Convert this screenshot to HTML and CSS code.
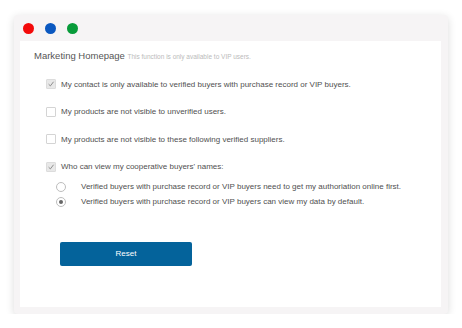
FILE: index.html
```html
<!DOCTYPE html>
<html lang="en">
  <head>
    <meta charset="UTF-8" />
    <title>Marketing Homepage</title>
    <link rel="stylesheet" href="styles.css">
  </head>
  <body>
    <div class="window">
      <div class="titlebar">
        <span class="dot red"></span>
        <span class="dot blue"></span>
        <span class="dot green"></span>
      </div>

      <div class="panel">
        <h1 class="title">
          Marketing Homepage
          <span class="hint">This function is only available to VIP users.</span>
        </h1>

        <ul class="options">
          <li class="option">
            <span class="check on">
              <svg viewBox="0 0 10 10"><path d="M2 5.2 L4.2 7.4 L8.2 2.2" /></svg>
            </span>
            My contact is only available to verified buyers with purchase record or VIP buyers.
          </li>
          <li class="option">
            <span class="check"></span>
            My products are not visible to unverified users.
          </li>
          <li class="option">
            <span class="check"></span>
            My products are not visible to these following verified suppliers.
          </li>
          <li class="option">
            <span class="check on">
              <svg viewBox="0 0 10 10"><path d="M2 5.2 L4.2 7.4 L8.2 2.2" /></svg>
            </span>
            Who can view my cooperative buyers' names:
          </li>
        </ul>

        <ul class="radios">
          <li class="option">
            <span class="radio"></span>
            Verified buyers with purchase record or VIP buyers need to get my authoriation online first.
          </li>
          <li class="option">
            <span class="radio on"></span>
            Verified buyers with purchase record or VIP buyers can view my data by default.
          </li>
        </ul>

        <button class="reset">Reset</button>
      </div>
    </div>
  </body>
</html>
```

FILE: styles.css
```css
body {
  margin: 0;
  background: #fff;
  font-family: "Liberation Sans", Arial, sans-serif;
  color: #555;
}

.window {
  width: 434px;
  height: 299px;
  margin: 15px 0 0 14px;
  padding: 0 7px 7px 6px;
  box-sizing: border-box;
  background: #f6f4f5;
  border-radius: 4px;
  box-shadow: 0 2px 8px rgba(0, 0, 0, 0.14);
  display: flex;
  flex-direction: column;
}

.titlebar {
  height: 26px;
  display: flex;
  align-items: center;
  gap: 11px;
  padding-left: 3px;
}

.dot {
  width: 11px;
  height: 11px;
  border-radius: 50%;
}
.red {
  background: #f30a0a;
}
.blue {
  background: #0b58c0;
}
.green {
  background: #089b3a;
}

.panel {
  flex: 1;
  background: #fff;
  padding: 9px 14px 0;
}

.title {
  margin: 0;
  font-size: 9.5px;
  font-weight: normal;
  line-height: 12px;
  color: #555;
}

.hint {
  font-size: 6.5px;
  color: #bbb;
}

.options,
.radios {
  list-style: none;
  margin: 0;
  padding: 0;
  display: flex;
  flex-direction: column;
}

.options {
  margin-top: 15px;
  padding-left: 12px;
  gap: 15.5px;
}

.radios {
  margin-top: 8px;
  padding-left: 22px;
  gap: 3px;
}

.option {
  display: flex;
  align-items: center;
  gap: 6px;
  height: 12px;
  font-size: 8px;
  color: #505050;
}

.check {
  width: 10px;
  height: 10px;
  box-sizing: border-box;
  border: 1px solid #d4d4d4;
  border-radius: 1px;
  background: #fff;
  display: flex;
  margin-right: -1px;
}
.check.on {
  background: #e8e8e8;
  border-color: #dcdcdc;
}
.check svg {
  width: 100%;
  height: 100%;
  fill: none;
  stroke: #8a8a8a;
  stroke-width: 1.2;
}

.radio {
  width: 10px;
  height: 10px;
  box-sizing: border-box;
  border: 1px solid #bdbdbd;
  border-radius: 50%;
  background: #fff;
  margin-right: 9px;
  display: flex;
  align-items: center;
  justify-content: center;
}
.radio.on::after {
  content: "";
  width: 4px;
  height: 4px;
  border-radius: 50%;
  background: #666;
}

.reset {
  display: block;
  width: 132px;
  height: 24px;
  margin: 34px 0 0 26px;
  border: none;
  border-radius: 2px;
  background: #04639b;
  color: #fff;
  font-family: "Liberation Sans", Arial, sans-serif;
  font-size: 8px;
  cursor: pointer;
}
```
